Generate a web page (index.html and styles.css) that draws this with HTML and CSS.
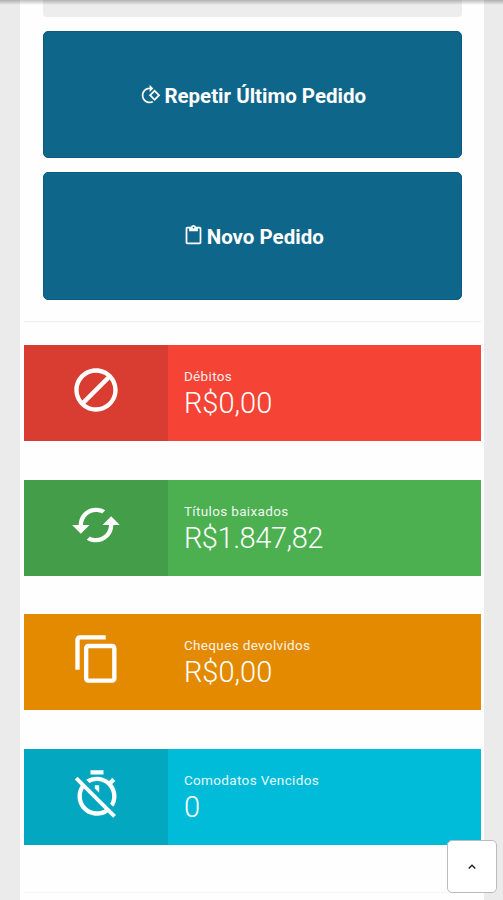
FILE: index.html
```html
<!DOCTYPE html>
<html lang="pt-BR">
<head>
  <meta charset="UTF-8" />
  <meta name="viewport" content="width=device-width, initial-scale=1" />
  <title>Pedidos</title>
  <link rel="stylesheet" href="styles.css">
</head>
<body>
  <div class="top-shadow"></div>
  <main class="page">
    <div class="actions">
      <div class="panel-end"></div>
      <button class="action">
        <svg class="flip" viewBox="0 0 24 24"><path d="M7.34 6.41L.86 12.9l6.49 6.48 6.49-6.48-6.5-6.49zM3.69 12.9l3.66-3.66L11 12.9l-3.66 3.66-3.65-3.66zm15.67-6.26C17.61 4.88 15.3 4 13 4V.76L8.76 5 13 9.24V6c1.79 0 3.58.68 4.95 2.05 2.73 2.73 2.73 7.17 0 9.9C16.58 19.32 14.79 20 13 20c-.97 0-1.94-.21-2.84-.61l-1.49 1.49C10.02 21.62 11.51 22 13 22c2.3 0 4.61-.88 6.36-2.64 3.52-3.51 3.52-9.21 0-12.72z"/></svg>
        <span>Repetir Último Pedido</span>
      </button>
      <button class="action">
        <svg viewBox="0 0 24 24"><path d="M19 2h-4.18C14.4.84 13.3 0 12 0c-1.3 0-2.4.84-2.82 2H5c-1.1 0-2 .9-2 2v16c0 1.1.9 2 2 2h14c1.1 0 2-.9 2-2V4c0-1.1-.9-2-2-2zm-7 0c.55 0 1 .45 1 1s-.45 1-1 1-1-.45-1-1 .45-1 1-1zm7 18H5V4h2v3h10V4h2v16z"/></svg>
        <span>Novo Pedido</span>
      </button>
    </div>

    <hr class="divider" />

    <div class="cards">
      <div class="card red">
        <div class="card-icon">
          <svg viewBox="0 0 24 24"><path d="M12 2C6.48 2 2 6.48 2 12s4.48 10 10 10 10-4.48 10-10S17.52 2 12 2zM4 12c0-4.42 3.58-8 8-8 1.85 0 3.55.63 4.9 1.69L5.69 16.9C4.63 15.55 4 13.85 4 12zm8 8c-1.85 0-3.55-.63-4.9-1.69L18.31 7.1C19.37 8.45 20 10.15 20 12c0 4.42-3.58 8-8 8z"/></svg>
        </div>
        <div class="card-body">
          <div class="label">Débitos</div>
          <div class="value">R$0,00</div>
        </div>
      </div>
      <div class="card green">
        <div class="card-icon">
          <svg viewBox="0 0 24 24"><path d="M19 8l-4 4h3c0 3.31-2.69 6-6 6-1.01 0-1.97-.25-2.8-.7l-1.46 1.46C8.97 19.54 10.43 20 12 20c4.42 0 8-3.58 8-8h3l-4-4zM6 12c0-3.31 2.69-6 6-6 1.01 0 1.97.25 2.8.7l1.46-1.46C15.03 4.46 13.57 4 12 4c-4.42 0-8 3.58-8 8H1l4 4 4-4H6z"/></svg>
        </div>
        <div class="card-body">
          <div class="label">Títulos baixados</div>
          <div class="value long">R$1.847,82</div>
        </div>
      </div>
      <div class="card orange">
        <div class="card-icon">
          <svg viewBox="0 0 24 24"><path d="M16 1H4c-1.1 0-2 .9-2 2v14h2V3h12V1zm3 4H8c-1.1 0-2 .9-2 2v14c0 1.1.9 2 2 2h11c1.1 0 2-.9 2-2V7c0-1.1-.9-2-2-2zm0 16H8V7h11v14z"/></svg>
        </div>
        <div class="card-body">
          <div class="label">Cheques devolvidos</div>
          <div class="value">R$0,00</div>
        </div>
      </div>
      <div class="card cyan">
        <div class="card-icon">
          <svg viewBox="0 0 24 24"><path d="M19.04 4.55l-1.42 1.42C16.07 4.74 14.12 4 12 4c-1.83 0-3.53.55-4.95 1.48l1.46 1.46C9.53 6.35 10.73 6 12 6c3.87 0 7 3.13 7 7 0 1.27-.35 2.47-.94 3.49l1.45 1.45C20.45 16.53 21 14.83 21 13c0-2.12-.74-4.07-1.97-5.61l1.42-1.42-1.41-1.42zM15 1H9v2h6V1zm-4 8.44l2 2V8h-2v1.44zM3.02 4L1.75 5.27 4.5 8.03C3.55 9.45 3 11.16 3 13c0 4.97 4.02 9 9 9 1.84 0 3.55-.55 4.98-1.5l2.5 2.5 1.27-1.27-7.71-7.71L3.02 4zM12 20c-3.87 0-7-3.13-7-7 0-1.28.35-2.48.95-3.52l9.56 9.56c-1.03.61-2.23.96-3.51.96z"/></svg>
        </div>
        <div class="card-body">
          <div class="label">Comodatos Vencidos</div>
          <div class="value">0</div>
        </div>
      </div>
    </div>

    <hr class="divider faint" />
  </main>

  <button class="to-top" aria-label="Voltar ao topo">
    <svg viewBox="0 0 8 5"><path d="M.7 4.5L4 1.2l3.3 3.3"/></svg>
  </button>
</body>
</html>
```

FILE: styles.css
```css
* {
  box-sizing: border-box;
}
body {
  margin: 0;
  height: 900px;
  overflow: hidden;
  background: #ebebeb;
  font-family: Roboto, "Liberation Sans", sans-serif;
}
.top-shadow {
  position: fixed;
  top: 0;
  left: 0;
  right: 0;
  height: 5px;
  background: linear-gradient(rgba(0, 0, 0, 0.25), rgba(0, 0, 0, 0));
}
.page {
  width: 464px;
  height: 900px;
  margin-left: 20px;
  padding: 0 3.5px 0 4px;
  background: #fefefe;
}
.actions {
  display: flex;
  flex-direction: column;
  gap: 14px;
  padding: 0 19px;
}
.panel-end {
  height: 17px;
  background: #ededed;
  border-radius: 0 0 4px 4px;
}
.action {
  display: flex;
  align-items: center;
  justify-content: center;
  gap: 3px;
  height: 127.3px;
  padding: 2px 0 0 2px;
  border: 1px solid #0b5a80;
  border-radius: 5px;
  background: #0f668b;
  color: #fff;
  font-family: inherit;
  font-size: 20.5px;
  font-weight: 700;
}
.action svg {
  width: 21px;
  height: 21px;
  margin-top: -2px;
  fill: #fff;
}
.action .flip {
  transform: scaleX(-1);
}
.divider {
  height: 1px;
  margin: 21.4px 0 0;
  border: none;
  background: #eee;
}
.divider.faint {
  background: #f5f5f5;
}
.cards {
  display: flex;
  flex-direction: column;
  gap: 38.5px;
  margin: 23.4px 0 47px;
}
.card {
  display: flex;
  height: 96px;
  color: #fff;
}
.card-icon {
  display: flex;
  justify-content: center;
  width: 144.4px;
  padding-top: 19px;
}
.card-icon svg {
  width: 52px;
  height: 52px;
  fill: #fff;
}
.orange .card-icon,
.cyan .card-icon {
  padding-left: 1px;
}
.card-body {
  padding: 22px 0 0 15.5px;
}
.label {
  font-size: 13.5px;
  line-height: 18px;
  letter-spacing: 0.35px;
  opacity: 0.9;
}
.value {
  font-size: 29px;
  font-weight: 300;
  line-height: 37px;
}
.value.long {
  letter-spacing: -0.45px;
}
.red {
  background: #f54336;
}
.red .card-icon {
  background: #d93c30;
}
.green {
  background: #4caf50;
}
.green .card-icon {
  background: #449d48;
}
.orange {
  background: #e38a00;
}
.cyan {
  background: #00bcd9;
}
.cyan .card-icon {
  background: #03a8c0;
}
.to-top {
  position: fixed;
  left: 447px;
  top: 840px;
  display: flex;
  align-items: center;
  justify-content: center;
  width: 50px;
  height: 53px;
  padding: 0;
  border: 1px solid #bbb;
  border-radius: 5px;
  background: #fff;
}
.to-top svg {
  width: 8px;
  height: 5px;
  fill: none;
  stroke: #222;
  stroke-width: 1.4;
}
```
